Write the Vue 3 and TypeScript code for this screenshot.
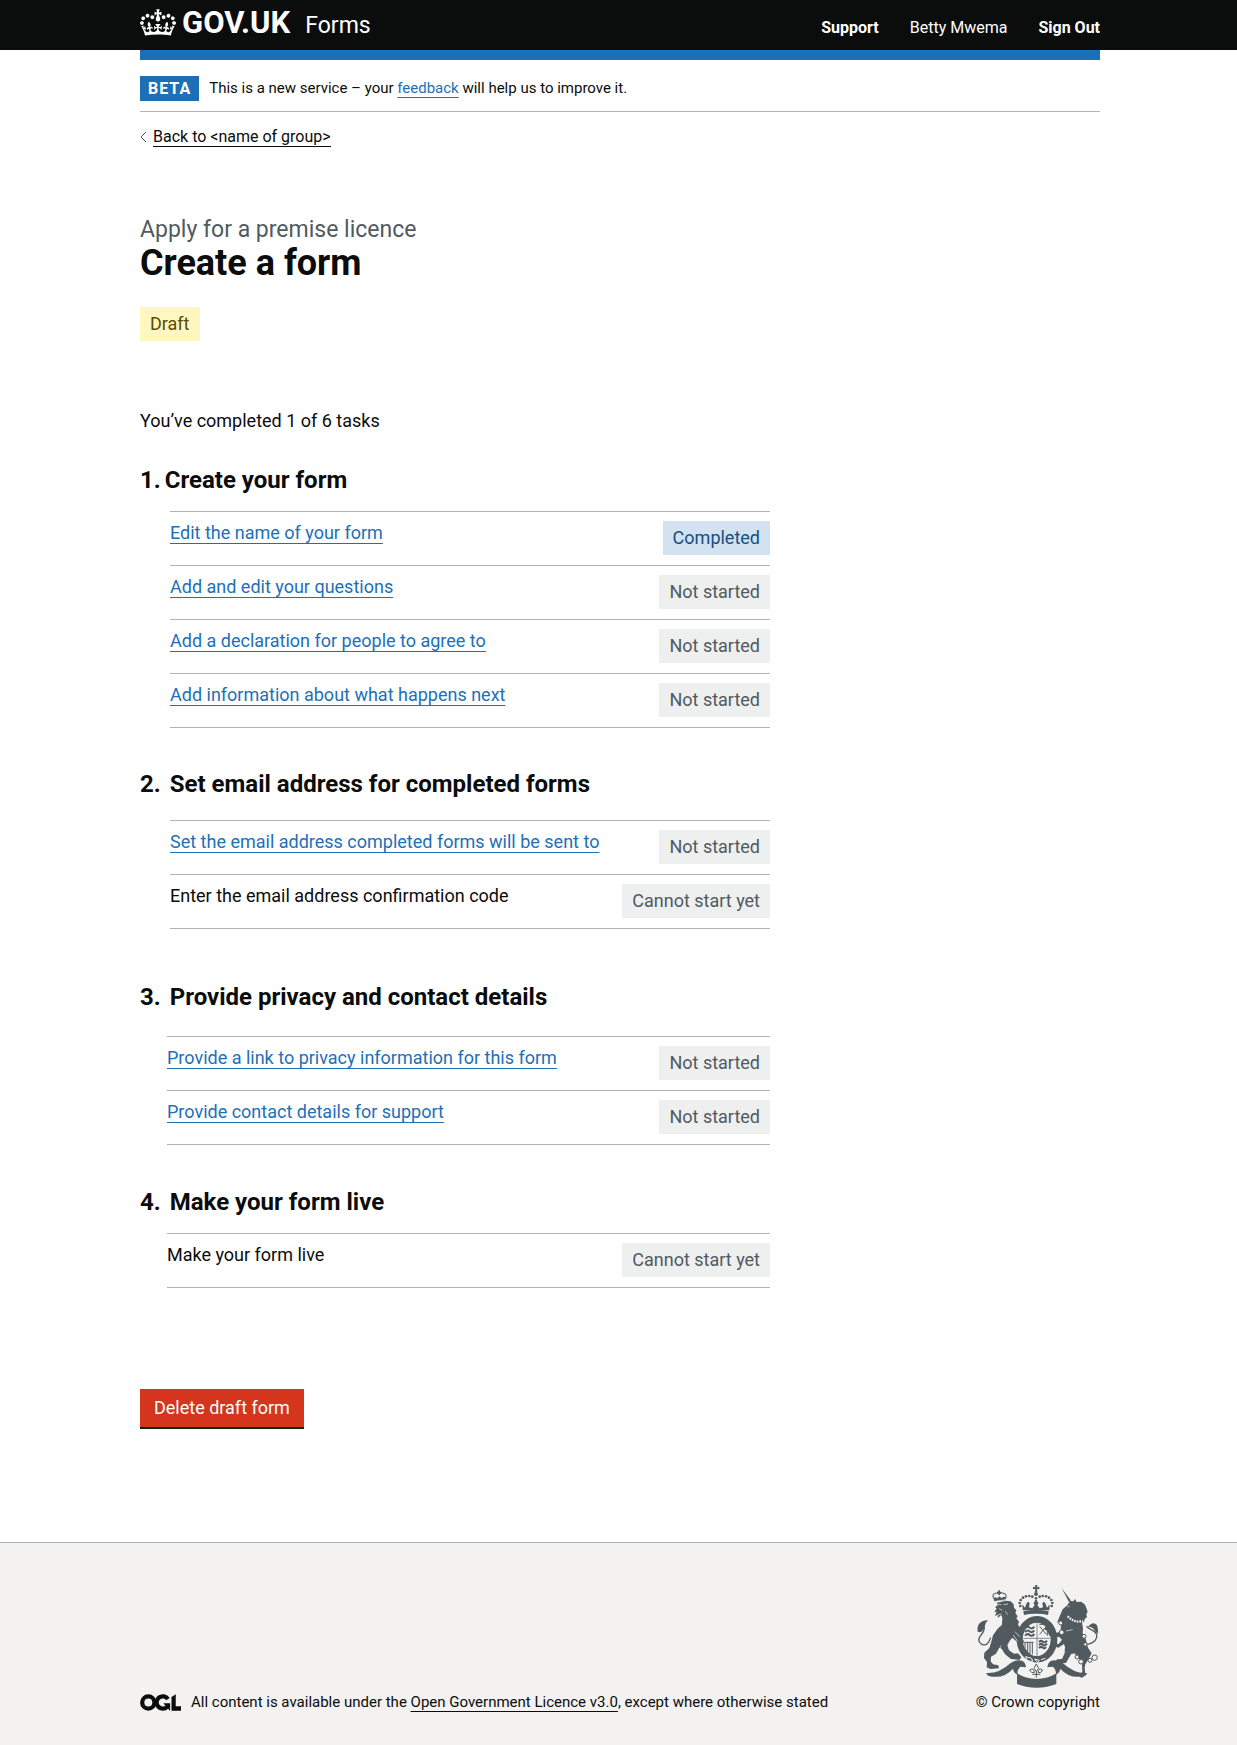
<script setup lang="ts">
type Status = 'Completed' | 'Not started' | 'Cannot start yet'

interface Task {
  label: string
  status: Status
}

interface Section {
  title: string
  variant: string
  tasks: Task[]
}

const sections: Section[] = [
  {
    title: 'Create your form',
    variant: 'create',
    tasks: [
      { label: 'Edit the name of your form', status: 'Completed' },
      { label: 'Add and edit your questions', status: 'Not started' },
      { label: 'Add a declaration for people to agree to', status: 'Not started' },
      { label: 'Add information about what happens next', status: 'Not started' },
    ],
  },
  {
    title: 'Set email address for completed forms',
    variant: 'email',
    tasks: [
      { label: 'Set the email address completed forms will be sent to', status: 'Not started' },
      { label: 'Enter the email address confirmation code', status: 'Cannot start yet' },
    ],
  },
  {
    title: 'Provide privacy and contact details',
    variant: 'privacy',
    tasks: [
      { label: 'Provide a link to privacy information for this form', status: 'Not started' },
      { label: 'Provide contact details for support', status: 'Not started' },
    ],
  },
  {
    title: 'Make your form live',
    variant: 'live',
    tasks: [{ label: 'Make your form live', status: 'Cannot start yet' }],
  },
]

// Pearls along the arches of the crown in the coat of arms
const pearls: [number, number][] = [
  [181, 107], [179, 98], [182, 89], [189, 82], [198, 78], [208, 77], [217, 79],
  [239, 79], [248, 77], [258, 78], [267, 82], [274, 89], [277, 98], [275, 107],
  [228, 84], [228, 92], [228, 100],
]

const chain: [number, number, number][] = [
  [305, 186, 7], [302, 158, 6], [372, 198, 6], [351, 260, 6], [363, 274, 7], [390, 270, 6], [404, 262, 8], [376, 222, 5],
]
</script>

<template>
  <div class="page">
    <header class="header">
      <div class="container header-row">
        <a class="brand" href="#">
          <svg class="crown" viewBox="0 0 132 97" aria-hidden="true">
            <path
              fill="currentColor"
              d="M25 30.2c3.5 1.5 7.7-.2 9.1-3.7 1.5-3.6-.2-7.8-3.9-9.2-3.6-1.4-7.6.3-9.1 3.9-1.4 3.5.3 7.5 3.9 9zM9 39.5c3.6 1.5 7.8-.2 9.2-3.7 1.5-3.6-.2-7.8-3.9-9.1-3.6-1.5-7.6.2-9.1 3.8-1.4 3.5.3 7.5 3.8 9zM4.4 57.2c3.5 1.5 7.7-.2 9.1-3.8 1.5-3.6-.2-7.7-3.9-9.1-3.5-1.5-7.6.3-9.1 3.8-1.4 3.5.3 7.6 3.9 9.1zm38.3-21.4c3.5 1.5 7.7-.2 9.1-3.8 1.5-3.6-.2-7.7-3.9-9.1-3.6-1.5-7.6.3-9.1 3.8-1.3 3.6.4 7.7 3.9 9.1zm64.4-5.6c-3.6 1.5-7.8-.2-9.1-3.7-1.5-3.6.2-7.8 3.8-9.2 3.6-1.4 7.7.3 9.2 3.9 1.3 3.5-.4 7.5-3.9 9zm15.9 9.3c-3.6 1.5-7.7-.2-9.1-3.7-1.5-3.6.2-7.8 3.7-9.1 3.6-1.5 7.7.2 9.2 3.8 1.5 3.5-.3 7.5-3.8 9zm4.7 17.7c-3.6 1.5-7.8-.2-9.2-3.8-1.5-3.6.2-7.7 3.9-9.1 3.6-1.5 7.7.3 9.2 3.8 1.3 3.5-.4 7.6-3.9 9.1zM89.3 35.8c-3.6 1.5-7.8-.2-9.2-3.8-1.4-3.6.2-7.7 3.9-9.1 3.6-1.5 7.7.3 9.2 3.8 1.4 3.6-.3 7.7-3.9 9.1zM69.7 17.7l8.9 4.7V9.3l-8.9 2.8c-.2-.3-.5-.6-.9-.9L72.4 0H59.6l3.5 11.2c-.3.3-.6.5-.9.9l-8.8-2.8v13.1l8.8-4.7c.3.3.6.7.9.9l-5 15.4v.1c-.2.8-.4 1.6-.4 2.4 0 4.1 3.1 7.5 7 8.1h.2c.3 0 .7.1 1 .1.4 0 .7 0 1-.1h.2c4-.6 7.1-4.1 7.1-8.1 0-.8-.1-1.7-.4-2.4V34l-5.1-15.4c.4-.2.7-.6 1-.9zM66 92.8c16.9 0 32.8 1.1 47.1 3.2 4-16.9 8.9-26.7 14-33.5l-9.6-3.4c1 4.9 1.1 7.2 0 10.2-1.5-1.4-3-4.3-4.2-8.7L108.6 76c2.8-2 5-3.2 7.5-3.3-4.4 9.4-10 11.9-13.6 11.2-4.3-.8-6.3-4.6-5.6-7.9 1-4.7 5.7-5.9 8-.5 4.3-8.7-3-11.4-7.6-8.8 7.1-7.2 7.9-13.5 2.1-21.1-8 6.1-8.1 12.3-4.5 20.8-4.7-5.4-12.1-2.5-9.5 6.2 3.4-5.2 7.9-2 7.2 3.1-.6 4.3-6.4 7.8-13.5 7.2-10.3-.9-10.9-8-11.2-13.8 2.5-.5 7.1 1.8 11 7.3L80.2 60c-4.1 4.4-8 5.3-12.3 5.4 1.4-4.4 8-11.6 8-11.6H55.5s6.4 7.2 7.9 11.6c-4.2-.1-8-1-12.3-5.4l1.4 16.4c3.9-5.5 8.5-7.7 10.9-7.3-.3 5.8-.9 12.8-11.1 13.8-7.2.6-12.9-2.9-13.5-7.2-.7-5 3.8-8.3 7.1-3.1 2.7-8.7-4.6-11.6-9.4-6.2 3.7-8.5 3.6-14.7-4.6-20.8-5.8 7.6-5 13.9 2.2 21.1-4.7-2.6-11.9.1-7.7 8.8 2.3-5.5 7.1-4.2 8.1.5.7 3.3-1.3 7.1-5.7 7.9-3.5.7-9-1.8-13.5-11.2 2.5.1 4.7 1.3 7.5 3.3l-4.7-15.4c-1.2 4.4-2.7 7.2-4.3 8.7-1.1-3-.9-5.3 0-10.2l-9.5 3.4c5 6.9 9.9 16.7 14 33.5 14.8-2.1 30.8-3.2 47.7-3.2z"
            />
          </svg>
          <span class="logotype">GOV.UK</span>
          <span class="product">Forms</span>
        </a>
        <nav class="account" aria-label="Account">
          <a class="account-link" href="#">Support</a>
          <span>Betty Mwema</span>
          <a class="account-link" href="#">Sign Out</a>
        </nav>
      </div>
    </header>

    <div class="container">
      <div class="phase">
        <strong class="phase-tag">BETA</strong>
        <span>This is a new service – your <a class="link" href="#">feedback</a> will help us to improve it.</span>
      </div>
      <a class="back" href="#">
        <svg class="chevron" viewBox="0 0 7 12" aria-hidden="true">
          <path d="M6 1 1 6l5 5" fill="none" stroke="#505a5f" />
        </svg>
        <span class="back-text">Back to &lt;name of group&gt;</span>
      </a>

      <main>
        <h1 class="title"><span class="caption">Apply for a premise licence</span>Create a form</h1>
        <strong class="tag tag-draft">Draft</strong>
        <p class="summary">You’ve completed 1 of 6 tasks</p>

        <section v-for="(section, i) in sections" :key="section.title" :class="['section', section.variant]">
          <h2 class="section-title"><span>{{ i + 1 }}.</span><span>{{ section.title }}</span></h2>
          <ul class="tasks">
            <li v-for="task in section.tasks" :key="task.label" class="task">
              <span v-if="task.status === 'Cannot start yet'">{{ task.label }}</span>
              <a v-else class="link" href="#">{{ task.label }}</a>
              <strong :class="['tag', { 'tag-done': task.status === 'Completed' }]">{{ task.status }}</strong>
            </li>
          </ul>
        </section>

        <button class="delete" type="button">Delete draft form</button>
      </main>
    </div>

    <footer class="footer">
      <div class="container footer-row">
        <div class="licence">
          <svg class="ogl" viewBox="0 0 483 196" role="img" aria-label="Open Government Licence">
            <g fill="none" stroke="currentColor" stroke-width="50">
              <circle cx="98" cy="98" r="72" />
              <path d="M329 59A72 72 0 1 0 320 147" />
            </g>
            <path fill="currentColor" d="M275 106h80v88h-3zM371 32 421 0v143h62v51H371z" />
          </svg>
          <span>
            All content is available under the
            <a class="licence-link" href="#">Open Government Licence v3.0</a>, except where otherwise stated
          </span>
        </div>
        <a class="copyright" href="#">
          <svg class="crest" viewBox="48 42 372 310" aria-hidden="true">
            <g fill="#505a5f">
              <!-- crown -->
              <path d="M225 44h7l-1 7 7-2v8l-7-1 1 9h-7l1-9-7 1v-8l7 2z" />
              <circle cx="228" cy="71" r="6" />
              <circle v-for="(p, i) in pearls" :key="i" :cx="p[0]" :cy="p[1]" r="4" />
              <path d="M187 102l8 10 5-14 5-4 4 5-2 12 10 3 7-10-4-6 8-8 8 8-4 6 7 10 10-3-2-12 4-5 5 4 5 14 8-10-1 18H188z" />
              <path d="M190 123q38-8 76 0l-2 11q-36-8-72 0z" />
              <!-- lion -->
              <path d="M101 84l6-3 5 3 6-6 7 5 5-4 8 2-2 9-33 3zM115 60h5v4h4v4h-4v6h-5v-6h-4v-4h4z" />
              <path d="M106 98l32-7 14 2 9 9 1 10 7 8-3 8 7 10-4 6 8 10-3 9 9 12-1 9 6 8-4 9 8 12-3 9-12 1-8-10-12-11-8 9-7 14 5 15 15 10 12-1 10 12-6 8-25-3-18-14-10-17-7-3-10 18-15 9-1 14 7 9 16 3 2 9-26 2-11-5 1-16-9-12 1-16 15-14 6-19 5-19 14-20 13-12 1-20-3-9-11 9 1-10-9 4 5-13-7 2 7-12-5-3 8-6-3-8z" />
              <path d="M53 184q-4-22 14-31 11-5 17-3-9 8-10 19-4 13-13 17z" />
              <!-- unicorn -->
              <path d="M305 54l27 36-5 5z" />
              <path d="M308 117l14-12 8-14 10 2 5-7 5 9 14-1 11 9 4 10 4 11-4 8 2 9-7 5-1 7-7 4 3 16-1 16 9 16 7 27 11 17-8 15-11 18-2 10 2 21-9 9-7-1 7-17-1-22-9-17-14-16-10 3-7 12-8 14-20 1-14 4-1-8 9-8 14-1 7-15 2-20-3-10-17 11-13-4 2-10 12 3 10-13-9-9-17 5-13-9-5-14-8-3 2-8 14 2 7 14 15 1 10-6 1-18-3-10-9 4z" />
              <path d="M383 171q15-20 27-8 5 9 4 27-8-4-15-16-9-6-16-3z" />
              <!-- garter and ribbon -->
              <path fill-rule="evenodd" d="M231 137a61 70 0 1 1-.1 0zm-1 20a42 50 0 1 0 .1 0z" />
              <path d="M78 308q38 3 74-30 20-12 34-7 11 5 12 20l-17-2q-11 10-8 24-12-5-14-18-30 34-75 21z" />
              <path d="M382 308q-38 3-74-30-20-12-34-7-11 5-12 20l17-2q11 10 8 24 12-5 14-18 30 34 75 21z" />
              <path d="M171 309q26 17 59 17t59-17v32q-26 11-59 11t-59-11z" />
            </g>
            <g fill="none" stroke="#505a5f" stroke-width="4">
              <path d="M103 86q-9-14 3-17 8-2 12 2 5-5 13-2 11 4 5 16" stroke-dasharray="4 1" />
              <path d="M92 202q-9 28-26 20-15-9-6-24 14-16 13-28" />
              <path d="M376 221q20 2 31-13 10-17-8-27-17-8-19-13" />
              <circle v-for="(c, i) in chain" :key="i" :cx="c[0]" :cy="c[1]" :r="c[2]" fill="#f3f2f1" stroke-width="3" />
              <path d="M195 174q8-8 14-2t14-3m-28 16q8-8 14-2t14-3m-28 16q8-8 14-2t14-3m14 24q6-6 12-1t12-3m-24 13q6-6 12-1t12-3m-24 13q6-6 12-1t8-3" stroke-width="6" />
              <path d="M239 168l20 24m0-24-20 24m-1-30h24v34" stroke-width="3" />
              <path d="M193 216h28m-26 0v18q4 12 14 16m-6-34v28m7-28v34m7-34v36" stroke-width="3" />
              <path d="M231 158v99M190 204h80" stroke-width="2" />
              <path d="M222 294l7-13 7 13-7 10zm-13 5q12-9 14 8-9 3-14-8zm39 0q-12-9-14 8 9 3 14-8zm-19 5v18m-12-10h24" stroke-width="3" />
            </g>
            <g fill="none" stroke="#f3f2f1" stroke-width="3">
              <path d="M197 259l18 5 3 9-15-1zm27 7l14 4-5 7zm19 2l13-4" />
              <path d="M323 138l12 10 14 6 20-1" stroke-width="7" stroke-dasharray="5 3" />
              <path d="M106 93l32-5" stroke-width="2" />
              <path d="M110 101l14 2m7 0 13-2m-27 14 10 5m-2 11-12 3m23-11 7 10M165 184l14 15m-19-5 13 19M116 242l7-16" stroke-width="2" />
              <path d="M322 110l7-3m-11 75 20-4m-45 72 23-5" stroke-width="2" />
              <path d="M198 132l60 0" stroke-width="1" />
            </g>
          </svg>
          <span>© Crown copyright</span>
        </a>
      </div>
    </footer>
  </div>
</template>

<style>
body {
  margin: 0;
  background: #fff;
}
</style>

<style scoped>
.page {
  font-family: Roboto, 'Liberation Sans', sans-serif;
  font-size: 18px;
  line-height: 24px;
  color: #0b0c0c;
}

.container {
  padding: 0 137px 0 140px;
}

.header {
  background: #0b0c0c;
  color: #fff;
}

.header-row {
  display: flex;
  justify-content: space-between;
  height: 50px;
}

.brand {
  display: flex;
  align-items: flex-start;
  padding-top: 9px;
  color: inherit;
  text-decoration: none;
}

.crown {
  width: 36px;
  height: 27px;
  margin-right: 6px;
}

.logotype {
  font-size: 31px;
  line-height: 28px;
  font-weight: 700;
  margin-right: 15px;
}

.product {
  font-size: 23px;
  line-height: 34px;
}

.account {
  display: flex;
  gap: 31px;
  padding-top: 16px;
  font-size: 16px;
  line-height: 24px;
}

.account-link {
  color: inherit;
  font-weight: 700;
  text-decoration: none;
}

.phase {
  display: flex;
  gap: 10px;
  align-items: center;
  padding: 16px 0 10px;
  border-top: 10px solid #1d70b8;
  border-bottom: 1px solid #b1b4b6;
  font-size: 15px;
  line-height: 25px;
}

.phase-tag {
  padding: 0 8px;
  background: #1d70b8;
  color: #fff;
  font-size: 16px;
  letter-spacing: 1px;
}

.link {
  color: #1d70b8;
  text-decoration: underline;
  text-decoration-thickness: 1px;
  text-decoration-skip-ink: none;
  text-underline-offset: 4px;
}

.back {
  display: flex;
  align-items: center;
  gap: 6px;
  width: fit-content;
  margin-top: 15px;
  font-size: 16px;
  line-height: 19px;
  color: #0b0c0c;
  text-decoration: none;
}

.chevron {
  width: 7px;
  height: 12px;
}

.back-text {
  border-bottom: 1px solid #0b0c0c;
}

.title {
  margin: 68px 0 26px;
  font-size: 36px;
  line-height: 36px;
}

.caption {
  display: block;
  font-size: 23px;
  line-height: 30px;
  font-weight: 400;
  color: #505a5f;
}

.tag {
  display: block;
  padding: 0 10px;
  background: #eeefef;
  color: #505a5f;
  font-weight: 400;
  line-height: 34px;
  white-space: nowrap;
}

.tag-done {
  background: #d2e2f1;
  color: #144e81;
}

.tag-draft {
  width: fit-content;
  background: #fff7bf;
  color: #594d00;
}

.summary {
  margin: 68px 0 32px;
}

.section {
  max-width: 630px;
}

.section-title {
  display: flex;
  gap: 9px;
  margin: 0 0 16px;
  font-size: 24px;
  line-height: 30px;
}

.tasks {
  margin: 0 0 0 30px;
  padding: 0;
  list-style: none;
  border-bottom: 1px solid #b1b4b6;
}

.task {
  display: flex;
  justify-content: space-between;
  align-items: flex-start;
  padding: 9px 0 10px;
  border-top: 1px solid #b1b4b6;
}

.create .section-title {
  gap: 4px;
}

.email {
  margin-top: 41px;
}

.email .section-title {
  margin-bottom: 21px;
}

.privacy {
  margin-top: 53px;
}

.privacy .section-title {
  margin-bottom: 24px;
}

.live {
  margin-top: 42px;
}

.privacy .tasks,
.live .tasks {
  margin-left: 27px;
}

.delete {
  display: block;
  margin-top: 101px;
  padding: 0 14px;
  border: 0;
  background: #d4351c;
  color: #fff;
  font: inherit;
  line-height: 38px;
  box-shadow: 0 2px 0 #002d18;
}

.footer {
  margin-top: 115px;
  border-top: 1px solid #b1b4b6;
  background: #f3f2f1;
}

.footer-row {
  display: flex;
  justify-content: space-between;
  align-items: flex-end;
  padding-top: 41px;
  padding-bottom: 33px;
  font-size: 15px;
  line-height: 20px;
}

.licence {
  display: flex;
  align-items: center;
  gap: 10px;
}

.ogl {
  width: 41px;
  height: 17px;
}

.licence-link {
  color: inherit;
  text-underline-offset: 4px;
  text-decoration-thickness: 1px;
  text-decoration-skip-ink: none;
}

.copyright {
  display: flex;
  flex-direction: column;
  align-items: flex-end;
  gap: 4px;
  color: inherit;
  text-decoration: none;
}

.crest {
  width: 124px;
  height: 104px;
}
</style>
